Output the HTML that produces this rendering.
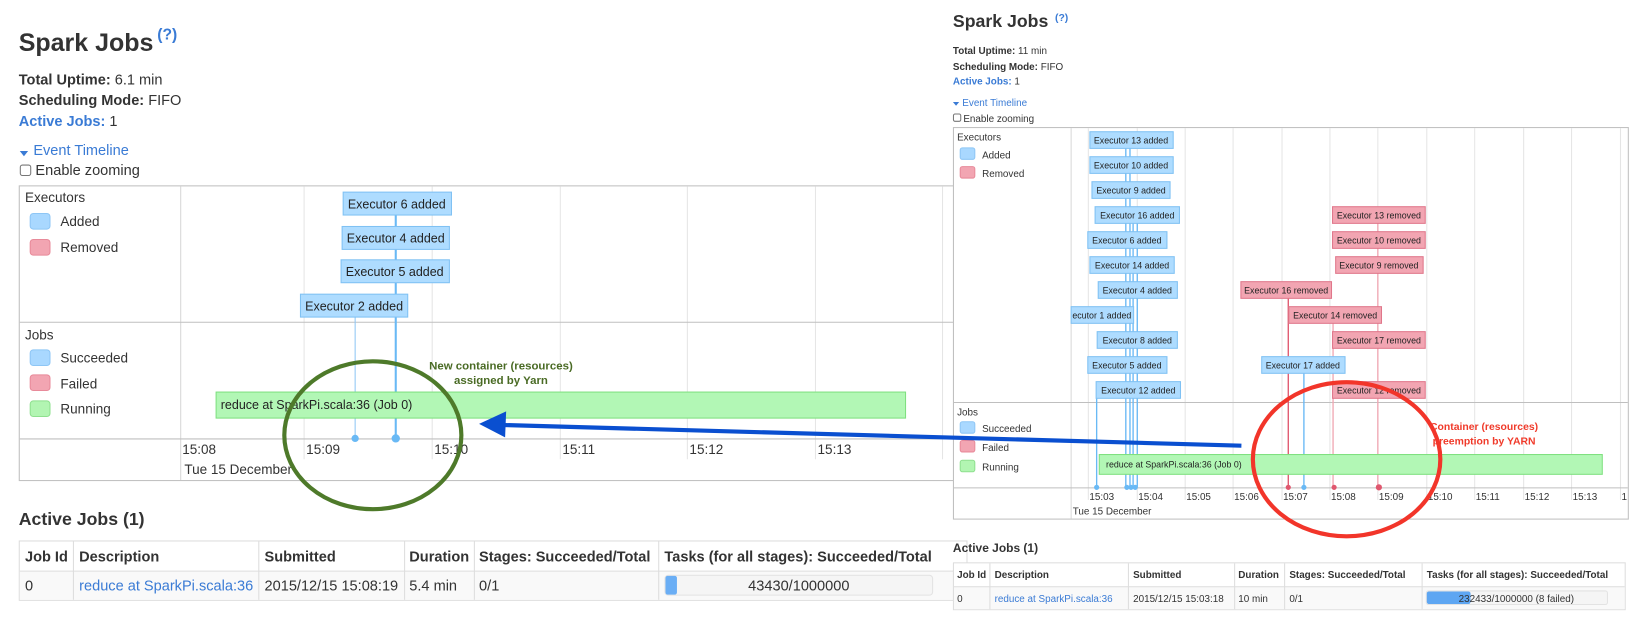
<!DOCTYPE html>
<html><head><meta charset="utf-8"><style>
html,body{margin:0;padding:0;background:#fff;width:1633px;height:630px;overflow:hidden}
svg{display:block}
svg text{font-family:"Liberation Sans",Arial,sans-serif}
</style></head><body>
<svg width="1633" height="630" viewBox="0 0 1568 605" preserveAspectRatio="none" xmlns="http://www.w3.org/2000/svg">
<!-- LEFT -->
<g fill="#333">
<text x="18" y="49" font-size="24" font-weight="bold">Spark Jobs</text>
<text x="151" y="38" font-size="15" font-weight="bold" fill="#3a7bd5">(?)</text>
<text x="18" y="81" font-size="14"><tspan font-weight="bold">Total Uptime:</tspan> 6.1 min</text>
<text x="18" y="101" font-size="14"><tspan font-weight="bold">Scheduling Mode:</tspan> FIFO</text>
<text x="18" y="121" font-size="14"><tspan font-weight="bold" fill="#3a7bd5">Active Jobs:</tspan> 1</text>
<path d="M19 145 L27 145 L23 150Z" fill="#3a7bd5"/>
<text x="32" y="149" font-size="14" fill="#3a7bd5">Event Timeline</text>
<rect x="19.5" y="158.5" width="10" height="10" rx="2" fill="#fff" stroke="#777"/>
<text x="34" y="168" font-size="14">Enable zooming</text>
</g>
<rect x="18.5" y="178.5" width="912" height="283" fill="#fff" stroke="#bfbfbf"/>
<g stroke="#e5e5e5">
<line x1="292" y1="179" x2="292" y2="441"/><line x1="415" y1="179" x2="415" y2="441"/><line x1="538" y1="179" x2="538" y2="441"/><line x1="660" y1="179" x2="660" y2="441"/><line x1="783" y1="179" x2="783" y2="441"/><line x1="905" y1="179" x2="905" y2="441"/>
</g>
<line x1="173.5" y1="179" x2="173.5" y2="461" stroke="#d8d8d8"/>
<line x1="19" y1="309.5" x2="930" y2="309.5" stroke="#bfbfbf"/>
<line x1="19" y1="421.5" x2="930" y2="421.5" stroke="#bfbfbf"/>
<g font-size="13" fill="#333">
<text x="24" y="194">Executors</text>
<rect x="29" y="205" width="19" height="15" rx="3" fill="#a9d8ff" stroke="#8ec6f5"/><text x="58" y="217">Added</text>
<rect x="29" y="230" width="19" height="15" rx="3" fill="#f2a5b2" stroke="#e88a9a"/><text x="58" y="242">Removed</text>
<text x="24" y="326">Jobs</text>
<rect x="29" y="336" width="19" height="15" rx="3" fill="#a9d8ff" stroke="#8ec6f5"/><text x="58" y="348">Succeeded</text>
<rect x="29" y="360" width="19" height="15" rx="3" fill="#f2a5b2" stroke="#e88a9a"/><text x="58" y="373">Failed</text>
<rect x="29" y="385" width="19" height="15" rx="3" fill="#b2f5b2" stroke="#8fe08f"/><text x="58" y="397">Running</text>
<text x="175" y="436">15:08</text><text x="294" y="436">15:09</text><text x="417" y="436">15:10</text><text x="540" y="436">15:11</text><text x="662" y="436">15:12</text><text x="785" y="436">15:13</text>
<text x="177" y="455">Tue 15 December</text>
</g>
<line x1="380" y1="206" x2="380" y2="421" stroke="#69b9f5" stroke-width="2"/>
<line x1="341" y1="304" x2="341" y2="421" stroke="#8ec6f5"/>
<circle cx="380" cy="421" r="4" fill="#69b9f5"/><circle cx="341" cy="421" r="3.5" fill="#69b9f5"/>
<g font-size="12" fill="#222">
<rect x="329.5" y="184.5" width="104" height="22" fill="#aedcff" stroke="#7fc1f3"/><text x="381" y="200" text-anchor="middle">Executor 6 added</text>
<rect x="328.5" y="217.5" width="103" height="22" fill="#aedcff" stroke="#7fc1f3"/><text x="380" y="233" text-anchor="middle">Executor 4 added</text>
<rect x="327.5" y="249.5" width="104" height="22" fill="#aedcff" stroke="#7fc1f3"/><text x="379" y="265" text-anchor="middle">Executor 5 added</text>
<rect x="288.5" y="282.5" width="103" height="22" fill="#aedcff" stroke="#7fc1f3"/><text x="340" y="298" text-anchor="middle">Executor 2 added</text>
<rect x="207.5" y="376.5" width="662" height="25" fill="#b2f7b5" stroke="#7ee07f"/><text x="212" y="393">reduce at SparkPi.scala:36 (Job 0)</text>
</g>
<g font-size="11" font-weight="bold" fill="#4a6b25" text-anchor="middle">
<text x="481" y="355">New container (resources)</text><text x="481" y="369">assigned by Yarn</text>
</g>
<ellipse cx="358" cy="418" rx="85" ry="71" fill="none" stroke="#4e7a2a" stroke-width="4"/>
<text x="18" y="504" font-size="17" font-weight="bold" fill="#333">Active Jobs (1)</text>
<rect x="18.5" y="519.5" width="910" height="57" fill="#fff" stroke="#ddd"/>
<rect x="19" y="548" width="909" height="28" fill="#f9f9f9"/>
<line x1="19" y1="548.5" x2="928" y2="548.5" stroke="#ddd"/>
<g stroke="#ddd"><line x1="70.5" y1="520" x2="70.5" y2="576"/><line x1="248.5" y1="520" x2="248.5" y2="576"/><line x1="388.5" y1="520" x2="388.5" y2="576"/><line x1="455.5" y1="520" x2="455.5" y2="576"/><line x1="632.5" y1="520" x2="632.5" y2="576"/></g>
<g font-size="14" fill="#333">
<g font-weight="bold"><text x="24" y="539">Job Id</text><text x="76" y="539">Description</text><text x="254" y="539">Submitted</text><text x="393" y="539">Duration</text><text x="460" y="539">Stages: Succeeded/Total</text><text x="638" y="539">Tasks (for all stages): Succeeded/Total</text></g>
<text x="24" y="567">0</text><text x="76" y="567" fill="#3a7bd5">reduce at SparkPi.scala:36</text><text x="254" y="567">2015/12/15 15:08:19</text><text x="393" y="567">5.4 min</text><text x="460" y="567">0/1</text>
<rect x="638.5" y="552.5" width="257" height="19" rx="3" fill="#f5f5f5" stroke="#e3e3e3"/><rect x="639" y="553" width="11" height="18" rx="2" fill="#6aaef5"/>
<text x="767" y="567" text-anchor="middle">43430/1000000</text>
</g>

<!-- RIGHT -->
<g fill="#333">
<text x="915" y="26" font-size="17" font-weight="bold">Spark Jobs</text>
<text x="1013" y="20" font-size="10" font-weight="bold" fill="#3a7bd5">(?)</text>
<text x="915" y="52" font-size="9.5"><tspan font-weight="bold">Total Uptime:</tspan> 11 min</text>
<text x="915" y="67" font-size="9.5"><tspan font-weight="bold">Scheduling Mode:</tspan> FIFO</text>
<text x="915" y="81" font-size="9.5"><tspan font-weight="bold" fill="#3a7bd5">Active Jobs:</tspan> 1</text>
<path d="M915 98 L921 98 L918 101.5Z" fill="#3a7bd5"/>
<text x="924" y="102" font-size="9.5" fill="#3a7bd5">Event Timeline</text>
<rect x="915.5" y="109.5" width="7" height="7" rx="1.5" fill="#fff" stroke="#777"/>
<text x="925" y="117" font-size="9.5">Enable zooming</text>
</g>
<rect x="915.5" y="122.5" width="648" height="376" fill="#fff" stroke="#bfbfbf"/>
<g stroke="#e5e5e5">
<line x1="1045" y1="123" x2="1045" y2="480"/><line x1="1092" y1="123" x2="1092" y2="480"/><line x1="1138" y1="123" x2="1138" y2="480"/><line x1="1184" y1="123" x2="1184" y2="480"/><line x1="1231" y1="123" x2="1231" y2="480"/><line x1="1277" y1="123" x2="1277" y2="480"/><line x1="1323" y1="123" x2="1323" y2="480"/><line x1="1370" y1="123" x2="1370" y2="480"/><line x1="1416" y1="123" x2="1416" y2="480"/><line x1="1463" y1="123" x2="1463" y2="480"/><line x1="1509" y1="123" x2="1509" y2="480"/><line x1="1556" y1="123" x2="1556" y2="480"/>
</g>
<line x1="1028.5" y1="123" x2="1028.5" y2="498" stroke="#d8d8d8"/>
<line x1="916" y1="386.5" x2="1563" y2="386.5" stroke="#bfbfbf"/>
<line x1="916" y1="468.5" x2="1563" y2="468.5" stroke="#bfbfbf"/>
<g font-size="9.5" fill="#333">
<text x="919" y="135">Executors</text>
<rect x="922" y="142" width="14" height="11" rx="2" fill="#a9d8ff" stroke="#8ec6f5"/><text x="943" y="152">Added</text>
<rect x="922" y="160" width="14" height="11" rx="2" fill="#f2a5b2" stroke="#e88a9a"/><text x="943" y="170">Removed</text>
<text x="919" y="399">Jobs</text>
<rect x="922" y="405" width="14" height="11" rx="2" fill="#a9d8ff" stroke="#8ec6f5"/><text x="943" y="415">Succeeded</text>
<rect x="922" y="423" width="14" height="11" rx="2" fill="#f2a5b2" stroke="#e88a9a"/><text x="943" y="433">Failed</text>
<rect x="922" y="442" width="14" height="11" rx="2" fill="#b2f5b2" stroke="#8fe08f"/><text x="943" y="452">Running</text>
<text x="1046" y="480">15:03</text><text x="1093" y="480">15:04</text><text x="1139" y="480">15:05</text><text x="1185" y="480">15:06</text><text x="1232" y="480">15:07</text><text x="1278" y="480">15:08</text><text x="1324" y="480">15:09</text><text x="1371" y="480">15:10</text><text x="1417" y="480">15:11</text><text x="1464" y="480">15:12</text><text x="1510" y="480">15:13</text><text x="1557" y="480">1</text>
<text x="1030" y="494">Tue 15 December</text>
</g>
<g stroke-width="1.3">
<line x1="1053" y1="380" x2="1053" y2="468" stroke="#69b9f5"/>
<line x1="1081" y1="140" x2="1081" y2="468" stroke="#69b9f5"/>
<line x1="1085" y1="140" x2="1085" y2="468" stroke="#69b9f5"/>
<line x1="1088" y1="200" x2="1088" y2="468" stroke="#69b9f5"/>
<line x1="1092" y1="200" x2="1092" y2="468" stroke="#69b9f5"/>
<line x1="1252" y1="356" x2="1252" y2="468" stroke="#69b9f5"/>
<line x1="1237" y1="284" x2="1237" y2="468" stroke="#e0576e"/>
<line x1="1280" y1="308" x2="1280" y2="468" stroke="#f0a8b4"/>
<line x1="1323" y1="210" x2="1323" y2="468" stroke="#f0a8b4"/>
</g>
<g fill="#69b9f5"><circle cx="1053" cy="468" r="2.5"/><circle cx="1082" cy="468" r="2.5"/><circle cx="1086" cy="468" r="2.5"/><circle cx="1090" cy="468" r="2.5"/><circle cx="1252" cy="468" r="2.5"/></g>
<g fill="#e0576e"><circle cx="1237" cy="468" r="2.5"/><circle cx="1281" cy="468" r="2.5"/><circle cx="1324" cy="468" r="3"/></g>
<g font-size="8.5" fill="#222" text-anchor="middle">
<g fill="#aedcff" stroke="#7fc1f3">
<rect x="1046.5" y="126.5" width="80" height="16"/><rect x="1046.5" y="150.5" width="80" height="16"/><rect x="1048.5" y="174.5" width="75" height="16"/><rect x="1051.5" y="198.5" width="81" height="16"/><rect x="1044.5" y="222.5" width="76" height="16"/><rect x="1046.5" y="246.5" width="81" height="16"/><rect x="1054.5" y="270.5" width="76" height="16"/><rect x="1028.5" y="294.5" width="60" height="16"/><rect x="1053.5" y="318.5" width="77" height="16"/><rect x="1044.5" y="342.5" width="76" height="16"/><rect x="1052.5" y="366.5" width="81" height="16"/><rect x="1211.5" y="342.5" width="80" height="16"/>
</g>
<g fill="#f2a5b2" stroke="#e0768a">
<rect x="1279.5" y="198.5" width="89" height="16"/><rect x="1279.5" y="222.5" width="89" height="16"/><rect x="1282.5" y="246.5" width="84" height="16"/><rect x="1191.5" y="270.5" width="87" height="16"/><rect x="1237.5" y="294.5" width="89" height="16"/><rect x="1279.5" y="318.5" width="89" height="16"/><rect x="1279.5" y="366.5" width="89" height="16"/>
</g>
<text x="1086" y="138">Executor 13 added</text><text x="1086" y="162">Executor 10 added</text><text x="1086" y="186">Executor 9 added</text><text x="1092" y="210">Executor 16 added</text><text x="1082" y="234">Executor 6 added</text><text x="1087" y="258">Executor 14 added</text><text x="1092" y="282">Executor 4 added</text><text x="1058" y="306">ecutor 1 added</text><text x="1092" y="330">Executor 8 added</text><text x="1082" y="354">Executor 5 added</text><text x="1093" y="378">Executor 12 added</text><text x="1251" y="354">Executor 17 added</text>
<text x="1324" y="210">Executor 13 removed</text><text x="1324" y="234">Executor 10 removed</text><text x="1324" y="258">Executor 9 removed</text><text x="1235" y="282">Executor 16 removed</text><text x="1282" y="306">Executor 14 removed</text><text x="1324" y="330">Executor 17 removed</text><text x="1324" y="378">Executor 12 removed</text>
</g>
<rect x="1055.5" y="436.5" width="483" height="19" fill="#b2f7b5" stroke="#7ee07f"/>
<text x="1062" y="449" font-size="8.5" fill="#222">reduce at SparkPi.scala:36 (Job 0)</text>
<g font-size="10" font-weight="bold" fill="#f03a2a" text-anchor="middle">
<text x="1425" y="413">Container (resources)</text><text x="1425" y="427">preemption by YARN</text>
</g>
<ellipse cx="1293" cy="441" rx="90" ry="74" fill="none" stroke="#f2352a" stroke-width="4"/>
<text x="915" y="530" font-size="11.5" font-weight="bold" fill="#333">Active Jobs (1)</text>
<rect x="915.5" y="540.5" width="645" height="45" fill="#fff" stroke="#ddd"/>
<rect x="916" y="563" width="644" height="22" fill="#f9f9f9"/>
<line x1="916" y1="563.5" x2="1560" y2="563.5" stroke="#ddd"/>
<g stroke="#ddd"><line x1="950.5" y1="541" x2="950.5" y2="585"/><line x1="1083.5" y1="541" x2="1083.5" y2="585"/><line x1="1185.5" y1="541" x2="1185.5" y2="585"/><line x1="1233.5" y1="541" x2="1233.5" y2="585"/><line x1="1365.5" y1="541" x2="1365.5" y2="585"/></g>
<g font-size="9.5" fill="#333">
<g font-weight="bold"><text x="919" y="555">Job Id</text><text x="955" y="555">Description</text><text x="1088" y="555">Submitted</text><text x="1189" y="555">Duration</text><text x="1238" y="555">Stages: Succeeded/Total</text><text x="1370" y="555">Tasks (for all stages): Succeeded/Total</text></g>
<text x="919" y="578">0</text><text x="955" y="578" fill="#3a7bd5">reduce at SparkPi.scala:36</text><text x="1088" y="578">2015/12/15 15:03:18</text><text x="1189" y="578">10 min</text><text x="1238" y="578">0/1</text>
<rect x="1369.5" y="567.5" width="174" height="13" rx="2" fill="#f5f5f5" stroke="#e3e3e3"/><rect x="1370" y="568" width="42" height="12" rx="2" fill="#5ea6f2"/>
<text x="1456" y="578" text-anchor="middle">232433/1000000 (8 failed)</text>
</g>

<!-- arrow -->
<line x1="1192" y1="428" x2="478" y2="408" stroke="#0a4fd0" stroke-width="4"/>
<path d="M460 407 L486 395 L485 420 Z" fill="#0a4fd0"/>
</svg>
</body></html>
